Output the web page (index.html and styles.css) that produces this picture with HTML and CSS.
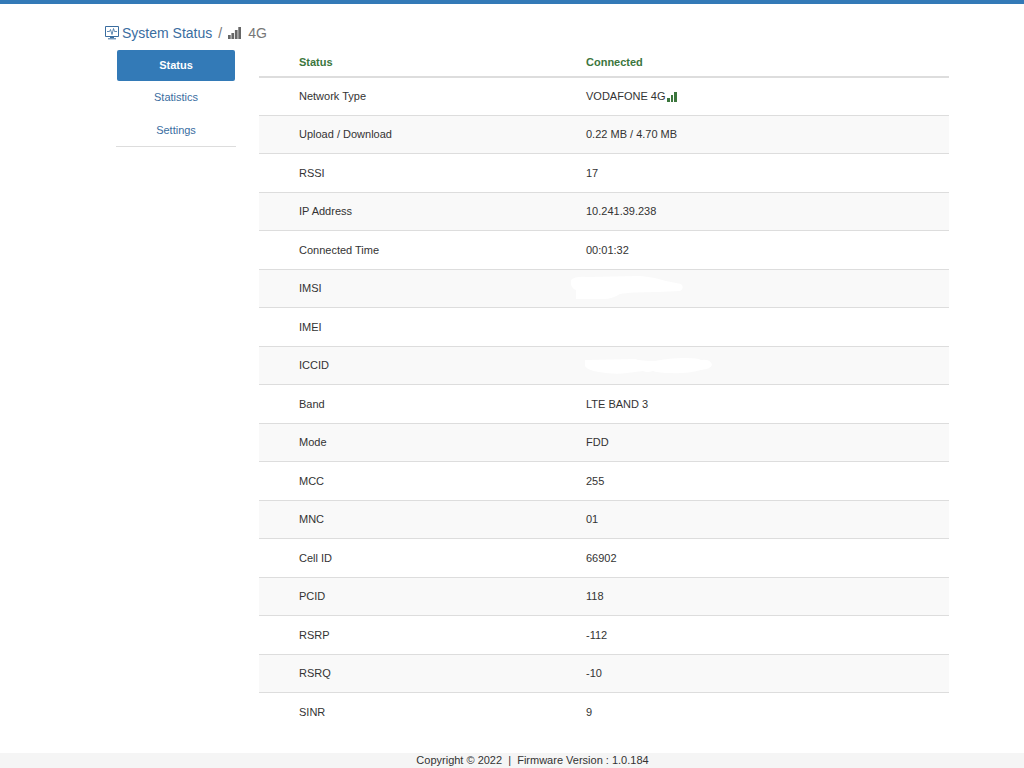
FILE: index.html
```html
<!DOCTYPE html>
<html lang="en">
<head>
<meta charset="utf-8">
<title>System Status / 4G</title>
<link rel="stylesheet" href="styles.css">
</head>
<body>
<div class="page">
  <nav class="breadcrumb" aria-label="Breadcrumb">
    <a class="crumb" href="#">
      <svg class="monitor" viewBox="0 0 14 14" fill="none" stroke="currentColor" aria-hidden="true">
        <path d="M.5.5h13v10H.5z"/>
        <path d="M2 5.500h2.500l1-2 1.500 5 1.500-6 1 3H12" stroke-width=".8"/>
        <path d="M5 11.500h4M3 12.800h8"/>
      </svg>System Status</a>
    <span class="slash">/</span>
    <span class="current"><svg class="signal" viewBox="0 0 13 12" aria-hidden="true"><path d="M0 8h2.700v4H0zM3.400 6h2.700v6H3.400zM6.900 3h2.700v9H6.900zM10.300 0H13v12h-2.700z" fill="currentColor"/></svg>4G</span>
  </nav>
  <div class="columns">
    <nav class="side" aria-label="Sections">
      <a class="side-link active" href="#">Status</a>
      <a class="side-link" href="#">Statistics</a>
      <a class="side-link" href="#">Settings</a>
    </nav>
    <main class="content">
      <table class="info">
        <thead><tr><th class="name">Status</th><th>Connected</th></tr></thead>
        <tbody>
          <tr><td>Network Type</td><td>VODAFONE 4G<svg class="bars" viewBox="0 0 10 10" aria-hidden="true"><path d="M0 6h3v4H0zM4 3h2v7H4zM7 0h3v10H7z" fill="currentColor"/></svg></td></tr>
          <tr><td>Upload / Download</td><td>0.22 MB / 4.70 MB</td></tr>
          <tr><td>RSSI</td><td>17</td></tr>
          <tr><td>IP Address</td><td>10.241.39.238</td></tr>
          <tr><td>Connected Time</td><td>00:01:32</td></tr>
          <tr><td>IMSI</td><td class="masked"><svg class="mask mask-imsi" viewBox="0 0 114 24" aria-hidden="true"><path d="M1 4Q5 0 18 1L70 0Q84 1 96 5L111 8Q115 12 110 15L88 16Q60 16 50 18Q42 23 34 23H6V14Q0 12 1 4Z" fill="#fff"/></svg></td></tr>
          <tr><td>IMEI</td><td></td></tr>
          <tr><td>ICCID</td><td class="masked"><svg class="mask mask-iccid" viewBox="0 0 128 18" aria-hidden="true"><path d="M0 3L50 2Q56 4 70 4Q84 1 100 1Q114 1 116 3Q126 2 127 8Q126 12 116 13Q100 17 86 16Q74 16 68 14Q62 16 58 14L42 16Q30 18 14 15Q2 13 0 9Z" fill="#fff"/></svg></td></tr>
          <tr><td>Band</td><td>LTE BAND 3</td></tr>
          <tr><td>Mode</td><td>FDD</td></tr>
          <tr><td>MCC</td><td>255</td></tr>
          <tr><td>MNC</td><td>01</td></tr>
          <tr><td>Cell ID</td><td>66902</td></tr>
          <tr><td>PCID</td><td>118</td></tr>
          <tr><td>RSRP</td><td>-112</td></tr>
          <tr><td>RSRQ</td><td>-10</td></tr>
          <tr><td>SINR</td><td>9</td></tr>
        </tbody>
      </table>
    </main>
  </div>
  <footer class="footer">Copyright © 2022 &nbsp;|&nbsp; Firmware Version : 1.0.184</footer>
</div>
</body>
</html>
```
FILE: styles.css
```css
* { box-sizing: border-box; }
body {
  margin: 0;
  background: #fff;
  color: #333;
  font: 11px/15px "Liberation Sans", Arial, sans-serif;
}
a { color: #3a6d9f; text-decoration: none; }
.page {
  display: flex;
  flex-direction: column;
  min-height: 100vh;
  border-top: 4px solid #337ab7;
}
.breadcrumb {
  display: flex;
  align-items: center;
  gap: 6px;
  padding: 19px 75px 0 105px;
  font-size: 14px;
  line-height: 20px;
}
.crumb { display: flex; align-items: center; gap: 3px; }
.monitor { width: 14px; height: 14px; }
.slash { color: #777; }
.current { display: flex; align-items: center; gap: 7px; color: #777; }
.signal { width: 13px; height: 12px; color: #666; }
.columns {
  display: flex;
  align-items: flex-start;
  gap: 23px;
  padding: 5px 75px 0 116px;
}
.side {
  display: flex;
  flex: 0 0 120px;
  flex-direction: column;
  margin-top: 2px;
  border-bottom: 1px solid #ddd;
}
.side-link { padding: 9px 0; text-align: center; }
.side-link:last-child { padding-bottom: 8px; }
.side-link.active {
  margin: 0 1px;
  padding: 8px 0;
  border-radius: 2px;
  background: #337ab7;
  color: #fff;
  font-weight: bold;
}
.content { flex: 1; }
.info {
  width: 100%;
  border-spacing: 0;
  table-layout: fixed;
}
.info th {
  height: 30px;
  padding: 0 0 0 40px;
  border-bottom: 2px solid #ddd;
  color: #3c763d;
  text-align: left;
}
.info .name { width: 287px; }
.info td {
  height: 39px;
  padding: 0 0 0 40px;
  border-bottom: 1px solid #ddd;
}
.info tbody tr:nth-child(even) td { height: 38px; background: #f9f9f9; }
.info tbody tr:first-child td { height: 38px; }
.info tbody tr:last-child td { border-bottom: 0; }
.bars { width: 10px; height: 10px; margin-left: 2px; color: #3c763d; vertical-align: -2px; }
.info .masked { position: relative; }
.mask { position: absolute; }
.mask-imsi { top: 6px; left: 24px; width: 114px; height: 24px; }
.mask-iccid { top: 10px; left: 39px; width: 128px; height: 18px; }
.footer {
  height: 15px;
  margin-top: auto;
  padding-left: 41px;
  background: #f5f5f5;
  text-align: center;
}
```
